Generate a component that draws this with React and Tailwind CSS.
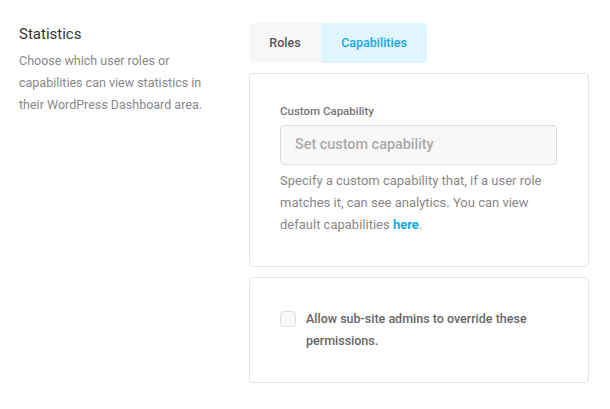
export default function App() {
  return (
    <div className="w-[610px] h-[409px] bg-white flex" style={{ fontFamily: "Roboto, sans-serif" }}>
      <div className="w-[249px] pl-[19px] pt-[24px] shrink-0">
        <div className="text-[15px] leading-[20px] text-[#333]">Statistics</div>
        <p className="mt-[6px] text-[12.5px] leading-[22px] text-[#888] w-[200px]">
          Choose which user roles or capabilities can view statistics in their WordPress Dashboard area.
        </p>
      </div>
      <div className="w-[340px] pt-[23px] flex flex-col">
        <div className="flex h-[40px] text-[12.5px] font-medium">
          <div className="w-[72px] flex items-center justify-center bg-[#f8f8f8] text-[#555] rounded-l-[4px]">Roles</div>
          <div className="w-[106px] flex items-center justify-center bg-[#e1f5fe] text-[#17a8e3] rounded-r-[4px]">Capabilities</div>
        </div>
        <div className="mt-[10px] h-[194px] border border-[#e6e6e6] rounded-[4px] pl-[30px] pr-[31px] pt-[27px]">
          <div className="text-[11.5px] leading-[20px] font-medium text-[#777]">Custom Capability</div>
          <div className="mt-[4px] h-[40px] bg-[#f8f8f8] border border-[#ddd] rounded-[4px] flex items-center pl-[14px] text-[14.4px] font-medium text-[#aaa]">
            Set custom capability
          </div>
          <p className="mt-[5px] text-[13px] leading-[22px] text-[#888]">
            Specify a custom capability that, if a user role matches it, can see analytics. You can view default capabilities <span className="font-bold text-[#17a8e3]">here</span>.
          </p>
        </div>
        <div className="mt-[10px] h-[106px] border border-[#e6e6e6] rounded-[4px] pl-[30px] pr-[31px] pt-[30px] flex gap-[10px]">
          <div className="mt-[3px] w-[16px] h-[16px] shrink-0 border border-[#ddd] bg-[#f8f8f8] rounded-[4px]"></div>
          <p className="text-[12.5px] leading-[22px] font-medium text-[#666] w-[240px]">
            Allow sub-site admins to override these permissions.
          </p>
        </div>
      </div>
    </div>
  );
}
